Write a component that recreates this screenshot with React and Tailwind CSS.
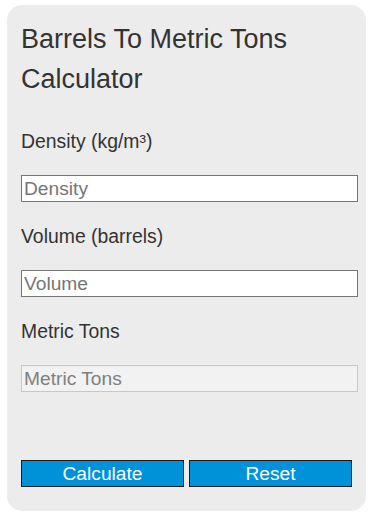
export default function App() {
  const fields = [
    { label: 'Density (kg/m³)', placeholder: 'Density' },
    { label: 'Volume (barrels)', placeholder: 'Volume' },
  ];

  return (
    <div className="min-h-[520px] bg-white pt-[5px] pl-[7px] font-['Liberation_Sans',Arial,sans-serif] text-[#333]">
      <div className="w-[359px] h-[506px] rounded-[15px] bg-[#ececec] px-[14px] pt-[14px]">
        <h1 className="text-[27px] leading-[40px] font-normal">Barrels To Metric Tons Calculator</h1>

        <div className="mt-[28px]">
          {fields.map((f, i) => (
            <div key={i} className="mb-[20px]">
              <div className="text-[19.4px] leading-[28px]">{f.label}</div>
              <input
                type="text"
                placeholder={f.placeholder}
                className="mt-[20px] block w-[337px] h-[27px] border border-[#767676] bg-white px-[2px] text-[19.2px] leading-none placeholder:text-[#767676] outline-none"
              />
            </div>
          ))}

          {/* result */}
          <div>
            <div className="text-[19.4px] leading-[28px]">Metric Tons</div>
            <input
              type="text"
              disabled
              placeholder="Metric Tons"
              className="mt-[20px] block w-[337px] h-[27px] border border-[#c8c8c8] bg-[#f2f2f2] px-[2px] text-[19.2px] leading-none placeholder:text-[#808080]"
            />
          </div>
        </div>

        <div className="mt-[68px] flex gap-[5px]">
          <button className="w-[163px] h-[27px] border border-[#1c1c1c] bg-[#0092d9] text-white text-[19.2px] leading-none">
            Calculate
          </button>
          <button className="w-[163px] h-[27px] border border-[#1c1c1c] bg-[#0092d9] text-white text-[19.2px] leading-none">
            Reset
          </button>
        </div>
      </div>
    </div>
  );
}
